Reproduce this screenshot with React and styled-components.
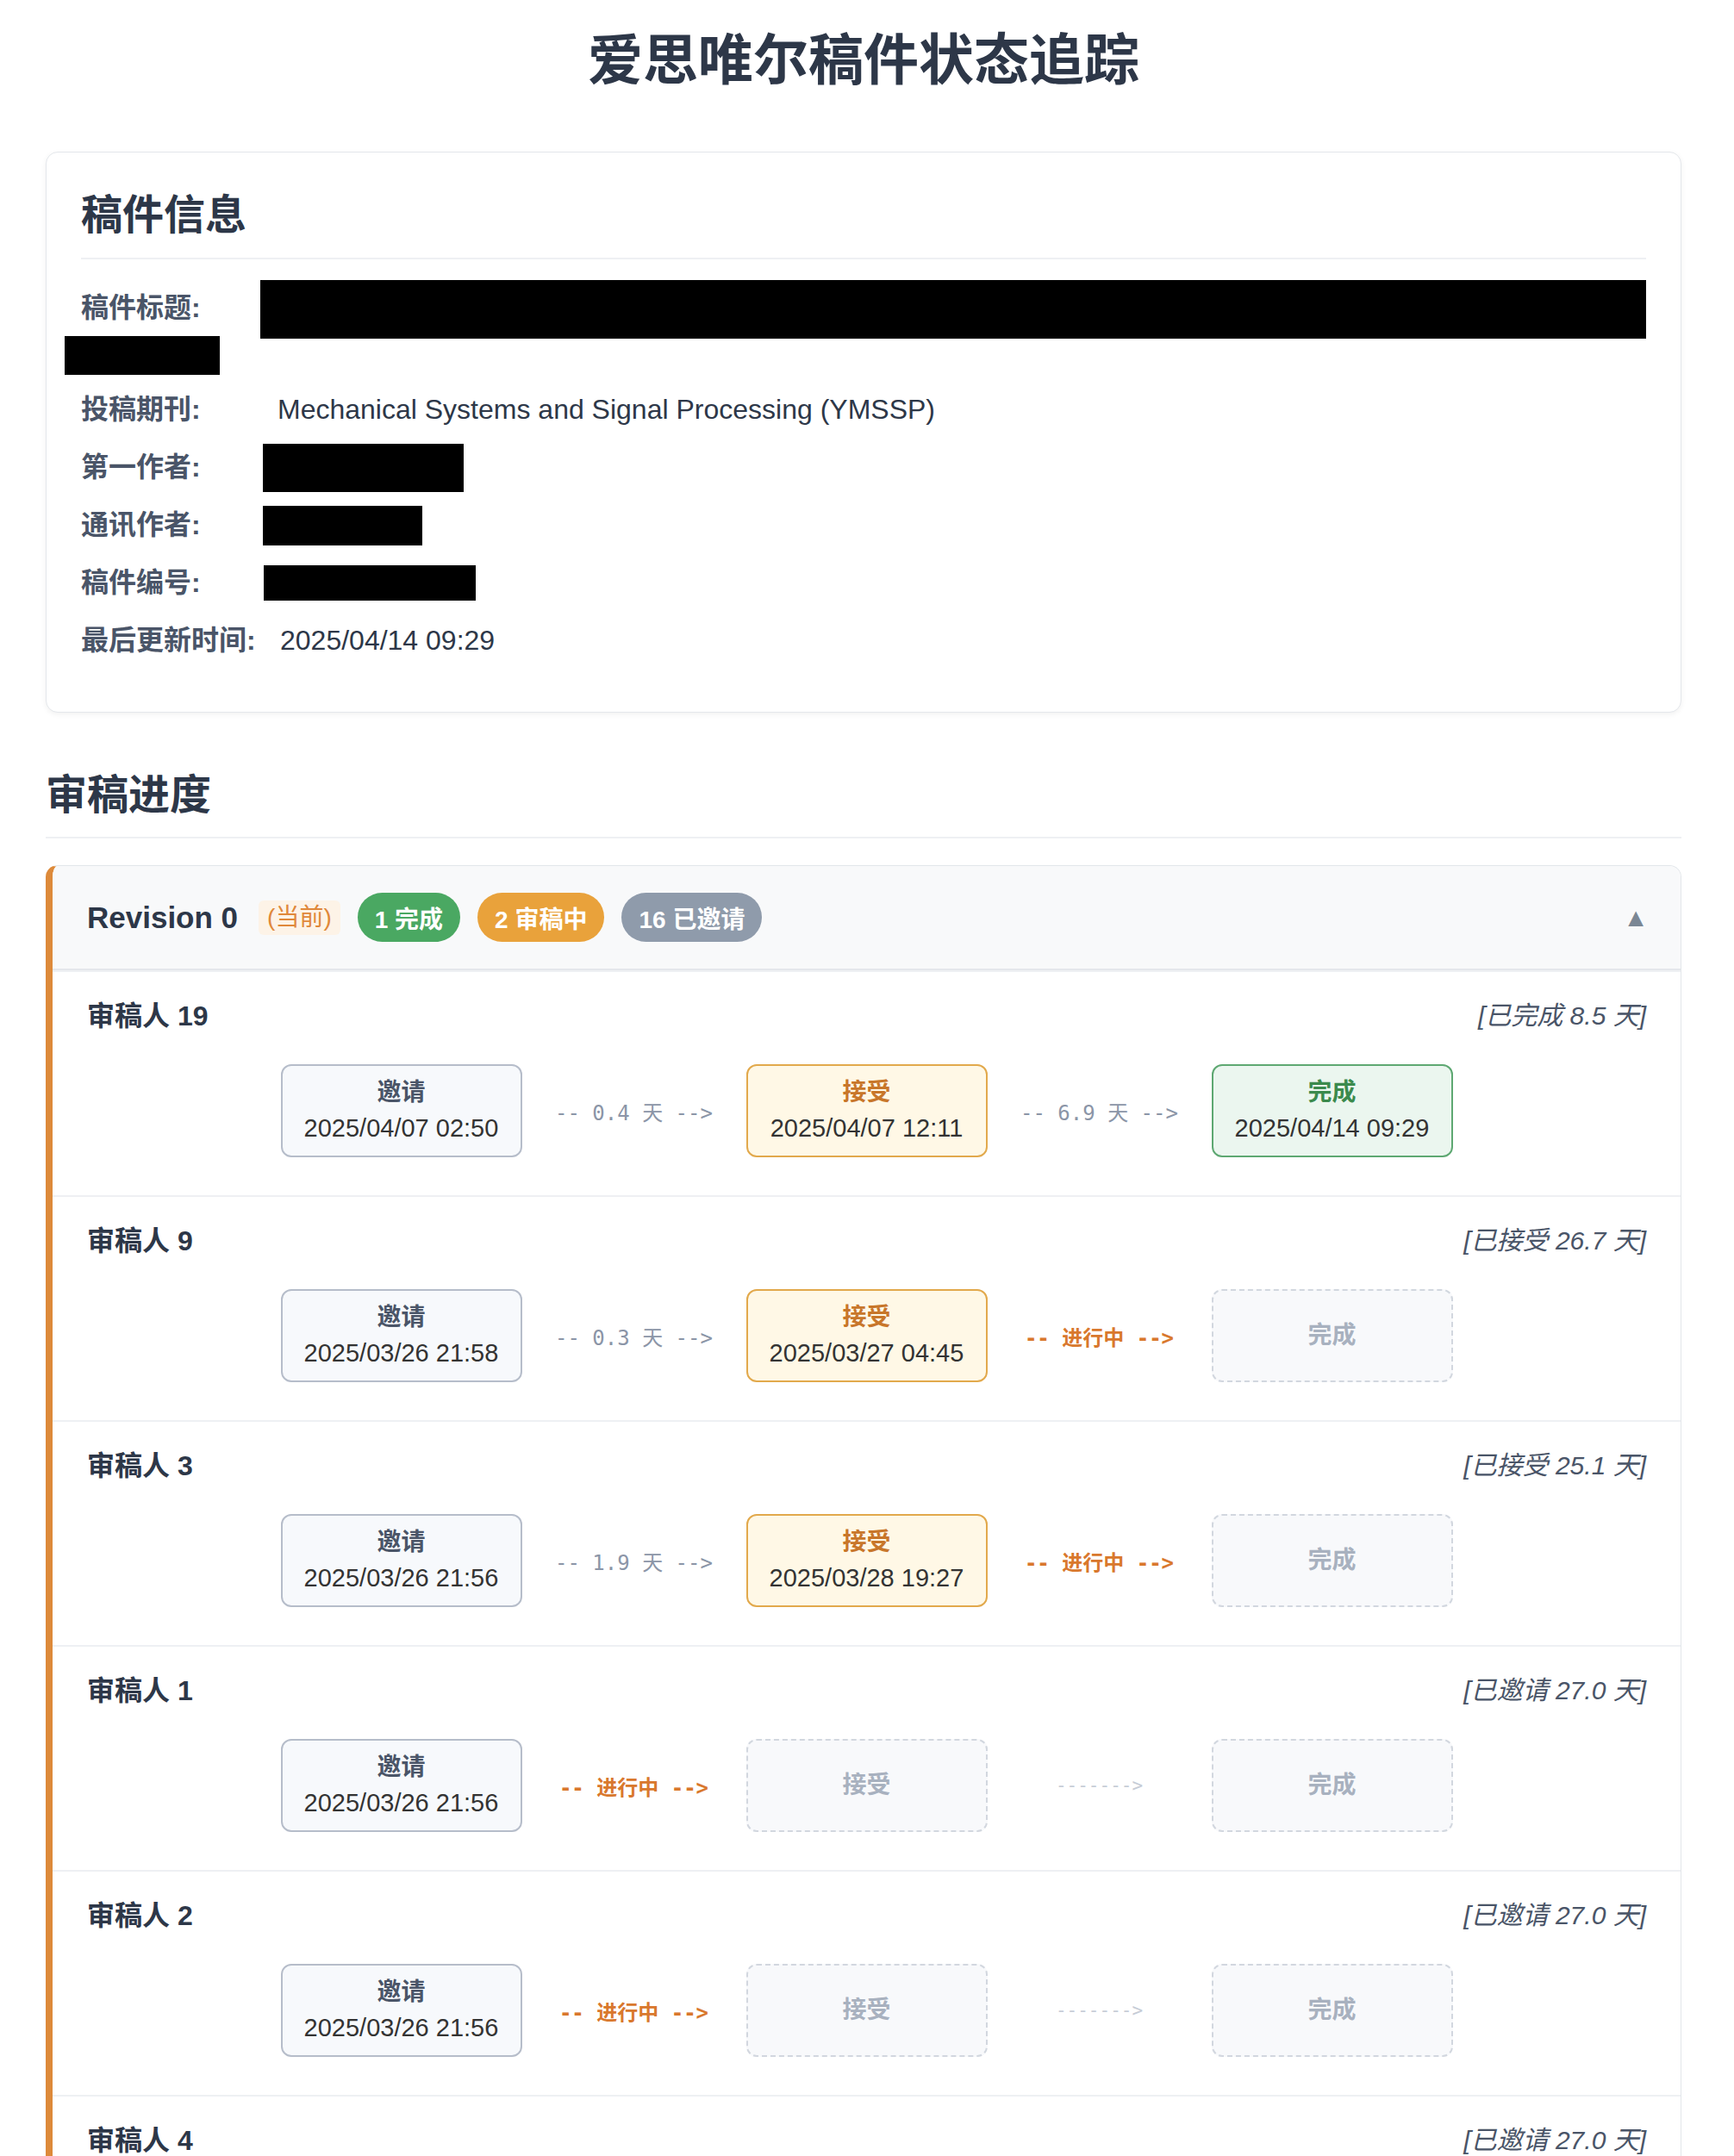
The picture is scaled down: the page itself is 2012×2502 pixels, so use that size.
import styled, { createGlobalStyle } from "styled-components";

const GlobalStyle = createGlobalStyle`
  body {
    margin: 0;
    background: #ffffff;
    font-family: "Liberation Sans", "Noto Sans CJK SC", sans-serif;
    color: #2d3748;
  }
`;

const Page = styled.div`
  width: 1898px;
  margin: 0 0 0 53px;
  padding-bottom: 80px;
`;

const Title = styled.h1`
  margin: 32px 0 67px;
  font-size: 64px;
  line-height: 77px;
  font-weight: 700;
  text-align: center;
  color: #2d3748;
`;

const InfoCard = styled.section`
  border: 1px solid #e4e7eb;
  border-radius: 14px;
  box-shadow: 0 2px 6px rgba(0, 0, 0, 0.06);
  padding: 44px 40px 57px;
  background: #fff;
`;

const CardTitle = styled.h2`
  margin: 0 0 31px;
  padding-bottom: 20px;
  border-bottom: 2px solid #eef0f3;
  font-size: 48px;
  line-height: 58px;
  font-weight: 700;
  color: #2d3748;
`;

const InfoRow = styled.div`
  position: relative;
  display: flex;
  align-items: ${(p) => (p.$tall ? "flex-start" : "center")};
  height: ${(p) => (p.$tall ? "102px" : "51px")};
  margin-bottom: 16px;
  font-size: 32px;
  line-height: 51px;
  &:last-child {
    margin-bottom: 0;
  }
`;

const Label = styled.span`
  flex: 0 0 228px;
  font-weight: 700;
  color: #4a5568;
  white-space: nowrap;
`;

const Value = styled.span`
  color: #2d3748;
  margin-left: ${(p) => p.$dx || 0}px;
`;

const Redact = styled.span`
  display: block;
  flex-shrink: 0;
  width: ${(p) => p.$w}px;
  height: ${(p) => p.$h}px;
  margin-left: ${(p) => p.$dx || 0}px;
  margin-top: ${(p) => p.$dy || 0}px;
  background: #000;
`;

const RedactOverlay = styled.span`
  position: absolute;
  left: -19px;
  top: 58px;
  width: 180px;
  height: 45px;
  background: #000;
`;

const SectionTitle = styled.h2`
  margin: 67px 0 31px;
  padding-bottom: 19px;
  border-bottom: 2px solid #eef0f3;
  font-size: 48px;
  line-height: 58px;
  font-weight: 700;
  color: #2d3748;
`;

const RevisionCard = styled.section`
  border: 1px solid #e2e6ea;
  border-left: 8px solid #dd8a3a;
  border-radius: 14px;
  overflow: hidden;
  background: #fff;
`;

const RevisionHeader = styled.div`
  display: flex;
  align-items: center;
  gap: 20px;
  padding: 31px 40px 31px 40px;
  background: #f8f9fa;
  border-bottom: 2px solid #e4e7eb;
`;

const RevisionName = styled.span`
  font-size: 35px;
  font-weight: 700;
  color: #2d3748;
  margin-right: 4px;
`;

const CurrentTag = styled.span`
  font-size: 28px;
  line-height: 40px;
  padding: 0 10px;
  border-radius: 6px;
  color: #e0883a;
  background: #fdf3e7;
`;

const Badge = styled.span`
  display: inline-flex;
  align-items: center;
  height: 57px;
  padding: 0 20px;
  border-radius: 29px;
  font-size: 28px;
  font-weight: 700;
  color: #fff;
  background: ${(p) => p.$bg};
`;

const Caret = styled.span`
  margin-left: auto;
  margin-right: -3px;
  font-size: 30px;
  line-height: 1;
  color: #7b8794;
`;

const ReviewerRow = styled.div`
  padding: 23px 40px 44px;
  border-top: 2px solid #eef0f3;
  &:first-of-type {
    border-top: none;
  }
`;

const ReviewerHead = styled.div`
  display: flex;
  justify-content: space-between;
  align-items: center;
  height: 50px;
`;

const ReviewerName = styled.span`
  font-size: 32px;
  font-weight: 700;
  color: #2d3748;
`;

const StatusNote = styled.span`
  font-size: 30px;
  font-style: italic;
  color: #4a5568;
`;

const Timeline = styled.div`
  display: flex;
  justify-content: center;
  align-items: center;
  margin-top: 34px;
`;

const stepTheme = {
  invite: { bg: "#f7f9fc", border: "2px solid #b6bdca", color: "#4a5568" },
  accept: { bg: "#fff8e6", border: "2px solid #e2a94c", color: "#c8762a" },
  done: { bg: "#ebf6ef", border: "2px solid #5ea872", color: "#3b8a4d" },
  pending: { bg: "#f8f9fb", border: "2px dashed #d2d7df", color: "#a8b1bf" },
};

const Step = styled.div`
  box-sizing: border-box;
  width: 280px;
  height: 108px;
  display: flex;
  flex-direction: column;
  align-items: center;
  justify-content: center;
  border-radius: 12px;
  background: ${(p) => stepTheme[p.$kind].bg};
  border: ${(p) => stepTheme[p.$kind].border};
`;

const StepLabel = styled.span`
  font-size: 28px;
  line-height: 40px;
  font-weight: 700;
  color: ${(p) => stepTheme[p.$kind].color};
`;

const StepDate = styled.span`
  font-size: 29px;
  line-height: 42px;
  color: #333;
`;

const arrowTheme = {
  time: { color: "#8b95a7", weight: 400, size: 24 },
  active: { color: "#d9782d", weight: 700, size: 24 },
  idle: { color: "#c6ccd6", weight: 400, size: 21 },
};

const Arrow = styled.span`
  width: 260px;
  text-align: center;
  white-space: pre;
  font-family: "DejaVu Sans Mono", "Noto Sans CJK SC", monospace;
  font-size: ${(p) => arrowTheme[p.$kind].size}px;
  font-weight: ${(p) => arrowTheme[p.$kind].weight};
  color: ${(p) => arrowTheme[p.$kind].color};
`;

const reviewers = [
  {
    name: "审稿人 19",
    note: "[已完成 8.5 天]",
    invite: "2025/04/07 02:50",
    gap1: "0.4 天",
    accept: "2025/04/07 12:11",
    gap2: "6.9 天",
    done: "2025/04/14 09:29",
  },
  {
    name: "审稿人 9",
    note: "[已接受 26.7 天]",
    invite: "2025/03/26 21:58",
    gap1: "0.3 天",
    accept: "2025/03/27 04:45",
  },
  {
    name: "审稿人 3",
    note: "[已接受 25.1 天]",
    invite: "2025/03/26 21:56",
    gap1: "1.9 天",
    accept: "2025/03/28 19:27",
  },
  { name: "审稿人 1", note: "[已邀请 27.0 天]", invite: "2025/03/26 21:56" },
  { name: "审稿人 2", note: "[已邀请 27.0 天]", invite: "2025/03/26 21:56" },
  { name: "审稿人 4", note: "[已邀请 27.0 天]", invite: "2025/03/26 21:56" },
];

function Reviewer({ r }) {
  return (
    <ReviewerRow>
      <ReviewerHead>
        <ReviewerName>{r.name}</ReviewerName>
        <StatusNote>{r.note}</StatusNote>
      </ReviewerHead>
      <Timeline>
        <Step $kind="invite">
          <StepLabel $kind="invite">邀请</StepLabel>
          <StepDate>{r.invite}</StepDate>
        </Step>
        {r.accept ? (
          <>
            <Arrow $kind="time">{`-- ${r.gap1} -->`}</Arrow>
            <Step $kind="accept">
              <StepLabel $kind="accept">接受</StepLabel>
              <StepDate>{r.accept}</StepDate>
            </Step>
          </>
        ) : (
          <>
            <Arrow $kind="active">{"-- 进行中 -->"}</Arrow>
            <Step $kind="pending">
              <StepLabel $kind="pending">接受</StepLabel>
            </Step>
          </>
        )}
        {r.done ? (
          <>
            <Arrow $kind="time">{`-- ${r.gap2} -->`}</Arrow>
            <Step $kind="done">
              <StepLabel $kind="done">完成</StepLabel>
              <StepDate>{r.done}</StepDate>
            </Step>
          </>
        ) : (
          <>
            <Arrow $kind={r.accept ? "active" : "idle"}>
              {r.accept ? "-- 进行中 -->" : "------->"}
            </Arrow>
            <Step $kind="pending">
              <StepLabel $kind="pending">完成</StepLabel>
            </Step>
          </>
        )}
      </Timeline>
    </ReviewerRow>
  );
}

export default function App() {
  return (
    <>
      <GlobalStyle />
      <Page>
        <Title>爱思唯尔稿件状态追踪</Title>

        <InfoCard>
          <CardTitle>稿件信息</CardTitle>
          <InfoRow $tall>
            <Label>稿件标题:</Label>
            <Redact $w={1608} $h={68} $dx={-20} $dy={-7} />
            <RedactOverlay />
          </InfoRow>
          <InfoRow>
            <Label>投稿期刊:</Label>
            <Value>Mechanical Systems and Signal Processing (YMSSP)</Value>
          </InfoRow>
          <InfoRow>
            <Label>第一作者:</Label>
            <Redact $w={233} $h={56} $dx={-17} />
          </InfoRow>
          <InfoRow>
            <Label>通讯作者:</Label>
            <Redact $w={185} $h={46} $dx={-17} />
          </InfoRow>
          <InfoRow>
            <Label>稿件编号:</Label>
            <Redact $w={246} $h={41} $dx={-16} />
          </InfoRow>
          <InfoRow>
            <Label>最后更新时间:</Label>
            <Value $dx={3}>2025/04/14 09:29</Value>
          </InfoRow>
        </InfoCard>

        <SectionTitle>审稿进度</SectionTitle>

        <RevisionCard>
          <RevisionHeader>
            <RevisionName>Revision 0</RevisionName>
            <CurrentTag>(当前)</CurrentTag>
            <Badge $bg="#4aa862">1 完成</Badge>
            <Badge $bg="#e9a23b">2 审稿中</Badge>
            <Badge $bg="#8f9bab">16 已邀请</Badge>
            <Caret>▲</Caret>
          </RevisionHeader>
          {reviewers.map((r) => (
            <Reviewer key={r.name} r={r} />
          ))}
        </RevisionCard>
      </Page>
    </>
  );
}
